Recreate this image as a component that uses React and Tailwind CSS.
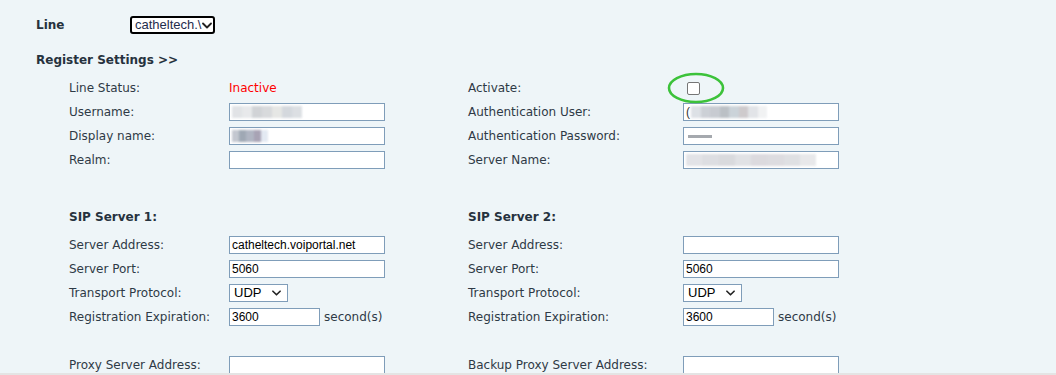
import React from "react";

const labelFont = { fontFamily: '"DejaVu Sans", Verdana, sans-serif' };

function Chevron({ className = "" }) {
  return (
    <svg viewBox="0 0 10 6" className={className} fill="none">
      <path d="M1 1l4 4 4-4" stroke="#222" strokeWidth="1.8" strokeLinecap="round" strokeLinejoin="round" />
    </svg>
  );
}

function Blur({ w, tones }) {
  return (
    <div className="flex h-[12px] blur-[1px] opacity-85" style={{ width: w }}>
      {tones.map((t, i) => (
        <div key={i} className="flex-1" style={{ background: t }} />
      ))}
    </div>
  );
}

function Field({ w = "w-[156px]", value, children }) {
  return (
    <div
      className={`${w} h-[18px] border border-[#7f9db9] bg-white flex items-center px-[2px] text-[12px] text-black overflow-hidden`}
      style={{ fontFamily: '"Liberation Sans", Arial, sans-serif' }}
    >
      {value}
      {children}
    </div>
  );
}

function Udp() {
  return (
    <div
      className="w-[59px] h-[18px] border border-[#7f9db9] bg-white flex items-center justify-between pl-[4px] pr-[6px] text-[13px] text-black"
      style={{ fontFamily: '"Liberation Sans", Arial, sans-serif' }}
    >
      <span>UDP</span>
      <Chevron className="w-[9px] h-[6px]" />
    </div>
  );
}

function Row({ label, width, children }) {
  return (
    <div className="flex items-center h-[24px]">
      <div className={`${width} shrink-0`}>{label}</div>
      <div className="flex items-center gap-[4px]">{children}</div>
    </div>
  );
}

function L({ label, children }) {
  return <Row label={label} width="w-[160px]">{children}</Row>;
}

function R({ label, children }) {
  return <Row label={label} width="w-[215px]">{children}</Row>;
}

export default function App() {
  return (
    <div className="h-[375px] w-[1056px] flex flex-col bg-[#eef5f8] overflow-hidden text-[12px] text-[#2e3a46]" style={labelFont}>
      <div className="flex-1 overflow-hidden pl-[36px] pt-[16px]">
        <div className="flex items-center h-[18px]">
          <div className="w-[94px] font-bold text-[#26323e]">Line</div>
          <div
            className="w-[85px] h-[18px] border-2 border-black rounded-[3px] bg-white flex items-center justify-between pl-[3px] pr-[3px] text-[13px] text-[#1f2d4d] overflow-hidden"
            style={{ fontFamily: '"Liberation Sans", Arial, sans-serif' }}
          >
            <span className="whitespace-nowrap">catheltech.\</span>
            <Chevron className="w-[10px] h-[7px] shrink-0" />
          </div>
        </div>

        <div className="mt-[18px] h-[16px] flex items-center font-bold text-[#26323e]">Register Settings &gt;&gt;</div>

        <div className="pl-[33px] mt-[8px] flex">
          <div className="w-[399px]">
            <L label="Line Status:">
              <span className="text-[#ff0000]">Inactive</span>
            </L>
            <L label="Username:">
              <Field>
                <Blur w={70} tones={["#dcdfe2", "#e4e6e8", "#c9ccd0", "#d2d4d7", "#e2e3e1", "#cdd2d8", "#d6dadf"]} />
              </Field>
            </L>
            <L label="Display name:">
              <Field>
                <Blur w={36} tones={["#b9bec8", "#8f9aa8", "#a3a9b8", "#9993a8", "#dfe6f0"]} />
              </Field>
            </L>
            <L label="Realm:">
              <Field />
            </L>

            <div className="mt-[33px] h-[24px] flex items-center font-bold text-[#26323e]">SIP Server 1:</div>
            <div className="mt-[4px]">
              <L label="Server Address:">
                <Field value="catheltech.voiportal.net" />
              </L>
              <L label="Server Port:">
                <Field value="5060" />
              </L>
              <L label="Transport Protocol:">
                <Udp />
              </L>
              <L label="Registration Expiration:">
                <Field w="w-[91px]" value="3600" />
                <span>second(s)</span>
              </L>
              <div className="h-[24px]" />
              <L label="Proxy Server Address:">
                <Field />
              </L>
            </div>
          </div>

          <div>
            <R label="Activate:">
              <div className="relative ml-[4px] w-[13px] h-[13px] border border-[#767676] rounded-[2px] bg-white">
                <svg className="absolute left-[-24px] top-[-14px] w-[60px] h-[34px] overflow-visible" viewBox="0 0 60 34" fill="none">
                  <ellipse cx="32" cy="19" rx="27" ry="14" stroke="#3cc23a" strokeWidth="2.6" />
                </svg>
              </div>
            </R>
            <R label="Authentication User:">
              <Field>
                <span className="text-[#333] mr-[1px]">(</span>
                <Blur w={76} tones={["#d8dce2", "#c4c8d0", "#bfc3ca", "#b0b6bc", "#c3ccd3", "#c6c1c4", "#dde0e4", "#eff0f2"]} />
              </Field>
            </R>
            <R label="Authentication Password:">
              <Field>
                <div className="ml-[2px] w-[24px] h-[3px] bg-[#a5a9ae] blur-[0.5px]" />
              </Field>
            </R>
            <R label="Server Name:">
              <Field>
                <Blur w={130} tones={["#dedfe3", "#d8d9dd", "#d3d4d8", "#dcdde1", "#d6d4d9", "#d8d6db", "#dadbdf", "#e4e5e7"]} />
              </Field>
            </R>

            <div className="mt-[33px] h-[24px] flex items-center font-bold text-[#26323e]">SIP Server 2:</div>
            <div className="mt-[4px]">
              <R label="Server Address:">
                <Field />
              </R>
              <R label="Server Port:">
                <Field value="5060" />
              </R>
              <R label="Transport Protocol:">
                <Udp />
              </R>
              <R label="Registration Expiration:">
                <Field w="w-[91px]" value="3600" />
                <span>second(s)</span>
              </R>
              <div className="h-[24px]" />
              <R label="Backup Proxy Server Address:">
                <Field />
              </R>
            </div>
          </div>
        </div>
      </div>
      <div className="h-[2px] bg-[#e4e4e4] shrink-0" />
    </div>
  );
}
